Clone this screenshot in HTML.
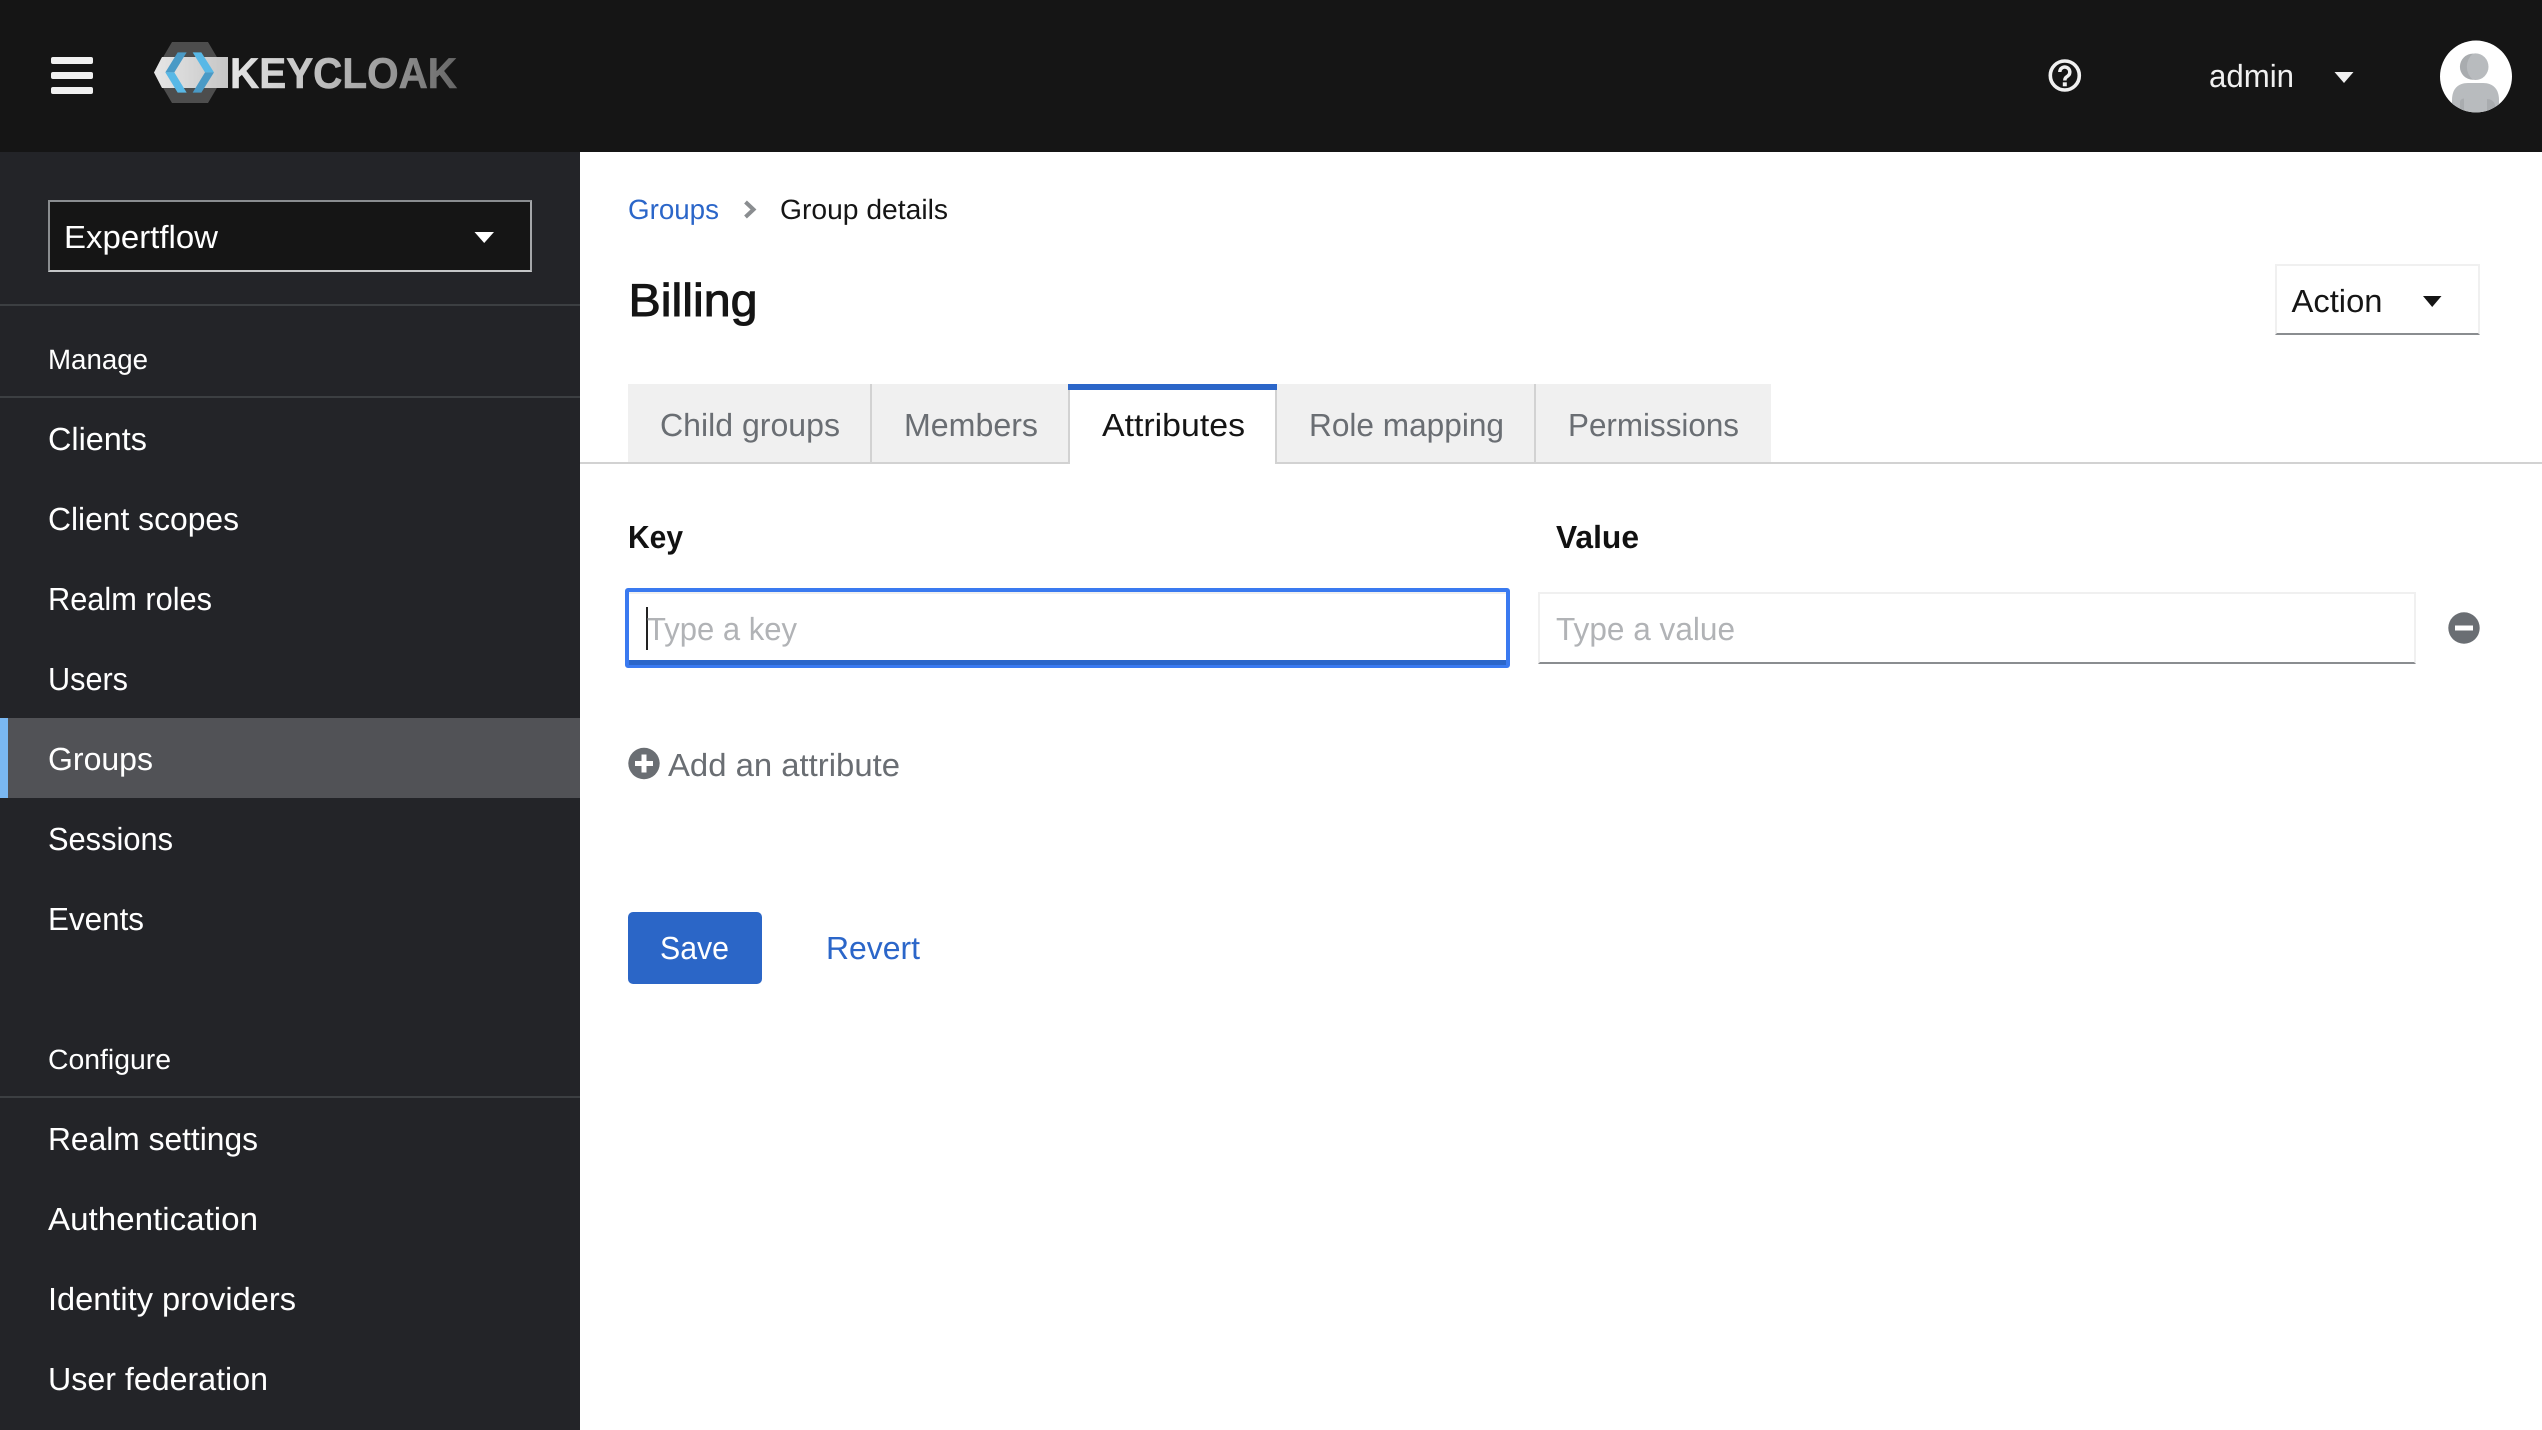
<!DOCTYPE html>
<html lang="en">
<head>
<meta charset="utf-8">
<title>Keycloak - Group details</title>
<style>
html,body{margin:0;padding:0;width:2542px;height:1430px;overflow:hidden;background:#fff}
.b{position:absolute;box-sizing:border-box}
svg{position:absolute;left:0;top:0}
text{font-family:"Liberation Sans",sans-serif;text-rendering:geometricPrecision}
.n{font-size:32px;fill:#fff}
.s{font-size:28px;fill:#fff}
.t{font-size:32px;fill:#6a6e73}
.p{font-size:32px;fill:#b1b3b6}
.k{font-size:32px;font-weight:700;fill:#111}
</style>
</head>
<body>
<div class="b" style="left:0;top:0;width:2542px;height:152px;background:#151515"></div>
<div class="b" style="left:0;top:152px;width:580px;height:1278px;background:#232428"></div>
<div class="b" style="left:51px;top:57px;width:42px;height:6.5px;background:#f0f0f0;border-radius:2px"></div>
<div class="b" style="left:51px;top:72px;width:42px;height:6.5px;background:#f0f0f0;border-radius:2px"></div>
<div class="b" style="left:51px;top:87px;width:42px;height:6.5px;background:#f0f0f0;border-radius:2px"></div>

<div class="b" style="left:48px;top:200px;width:484px;height:72px;background:#151515;border:2px solid #8a8d90;border-bottom-color:#c4c6c8;border-right-color:#a5a7aa"></div>
<div class="b" style="left:0;top:304px;width:580px;height:2px;background:#3c3f42"></div>
<div class="b" style="left:0;top:396px;width:580px;height:2px;background:#3c3f42"></div>
<div class="b" style="left:0;top:1096px;width:580px;height:2px;background:#3c3f42"></div>
<div class="b" style="left:0;top:718px;width:580px;height:80px;background:#515256;border-left:8px solid #7ab8f2"></div>

<div class="b" style="left:2275px;top:264px;width:205px;height:71px;background:#fff;border:2px solid #f0f0f0;border-bottom-color:#8a8d90"></div>

<div class="b" style="left:580px;top:462px;width:1962px;height:2px;background:#d2d2d2"></div>
<div class="b" style="left:628px;top:384px;width:244px;height:78px;background:#f0f0f0;border-right:2px solid #d2d2d2"></div>
<div class="b" style="left:872px;top:384px;width:197px;height:78px;background:#f0f0f0"></div>
<div class="b" style="left:1068px;top:384px;width:2px;height:80px;background:#d2d2d2"></div>
<div class="b" style="left:1070px;top:390px;width:206px;height:74px;background:#fff"></div>
<div class="b" style="left:1068px;top:384px;width:209px;height:6px;background:#2b66c9"></div>
<div class="b" style="left:1275px;top:390px;width:2px;height:74px;background:#d2d2d2"></div>
<div class="b" style="left:1277px;top:384px;width:259px;height:78px;background:#f0f0f0;border-right:2px solid #d2d2d2"></div>
<div class="b" style="left:1536px;top:384px;width:235px;height:78px;background:#f0f0f0"></div>

<div class="b" style="left:625px;top:588px;width:885px;height:80px;background:#fff;border:4px solid #3a7af0;border-radius:3px"></div>
<div class="b" style="left:629px;top:592px;width:877px;height:2px;background:#f0f0f0"></div>
<div class="b" style="left:629px;top:660px;width:877px;height:5px;background:#2b66c9"></div>
<div class="b" style="left:646px;top:607px;width:2px;height:43px;background:#222"></div>

<div class="b" style="left:1538px;top:592px;width:878px;height:72px;background:#fff;border:2px solid #f0f0f0;border-bottom-color:#8a8d90"></div>

<div class="b" style="left:628px;top:912px;width:134px;height:72px;background:#2b66c7;border-radius:5px"></div>

<svg width="2542" height="1430" viewBox="0 0 2542 1430" xmlns="http://www.w3.org/2000/svg">
<defs>
<linearGradient id="kc" gradientUnits="userSpaceOnUse" x1="230" y1="0" x2="457" y2="0">
<stop offset="0" stop-color="#e4e4e4"/><stop offset=".35" stop-color="#c4c4c4"/><stop offset=".65" stop-color="#a0a0a0"/><stop offset="1" stop-color="#666"/>
</linearGradient>
<linearGradient id="band" gradientUnits="userSpaceOnUse" x1="154" y1="0" x2="228" y2="0">
<stop offset="0" stop-color="#e6e6e6"/><stop offset="1" stop-color="#c6c6c6"/>
</linearGradient>
<clipPath id="av"><circle cx="2476" cy="76.5" r="36"/></clipPath>
</defs>

<!-- logo -->
<path d="M172 42H208L226 72.5L208 103H172L154 72.5Z" fill="#4d4d4d"/>
<path d="M154 72.5L162 57H228V88H162Z" fill="url(#band)"/>
<g transform="translate(130 20) scale(.3333)">
<path d="M106 157L143 97H170L133 157Z" fill="#4a9ac6"/>
<path d="M106 157H133L170 218H143Z" fill="#58b8e6"/>
<path d="M188 97H214L252 157H225Z" fill="#58b8e6"/>
<path d="M225 157H252L214 218H188Z" fill="#4a9ac6"/>
</g>
<text x="230" y="88" font-size="43" font-weight="700" fill="url(#kc)" stroke="url(#kc)" stroke-width=".6" textLength="227" lengthAdjust="spacingAndGlyphs">KEYCLOAK</text>

<!-- header right -->
<circle cx="2064.8" cy="75.5" r="14.500" fill="none" stroke="#f0f0f0" stroke-width="3.600"/>
<path d="M2059.8 72a5 5 0 1 1 8 4c-2 1.400-3 2.200-3 4.500" fill="none" stroke="#f0f0f0" stroke-width="3.500"/>
<rect x="2062.800" y="82.300" width="4" height="4" fill="#f0f0f0"/>
<text x="2209" y="87" class="n" style="fill:#f0f0f0" textLength="85" lengthAdjust="spacingAndGlyphs">admin</text>
<path d="M2334.500 72H2353.500L2344 83Z" fill="#f0f0f0"/>
<circle cx="2476" cy="76.500" r="36" fill="#fff"/>
<g clip-path="url(#av)">
<ellipse cx="2475.500" cy="66.700" rx="13" ry="13.300" fill="#b8bbbe"/>
<path d="M2473 53.600a13 13 0 0 0 0 26.200a17 17 0 0 1 0-26.200Z" fill="#a9acaf"/>
<path d="M2452 116V100c0-11 6-17 16-17h15c10 0 16 6 16 17v16Z" fill="#b8bbbe"/>
<path d="M2460 112v-10c0-2 2-3.500 4-3.500v13.500Z" fill="#a9acaf"/>
<path d="M2487 112V99c4 0 7 2 8 6v7Z" fill="#a9acaf"/>
</g>

<!-- sidebar -->
<text x="64" y="248" class="n" textLength="154" lengthAdjust="spacingAndGlyphs">Expertflow</text>
<path d="M474.500 232H494L484.200 243Z" fill="#fff"/>
<text x="48" y="369" class="s" textLength="100" lengthAdjust="spacingAndGlyphs">Manage</text>
<text x="48" y="450" class="n" textLength="99" lengthAdjust="spacingAndGlyphs">Clients</text>
<text x="48" y="530" class="n" textLength="191" lengthAdjust="spacingAndGlyphs">Client scopes</text>
<text x="48" y="610" class="n" textLength="164" lengthAdjust="spacingAndGlyphs">Realm roles</text>
<text x="48" y="690" class="n" textLength="80" lengthAdjust="spacingAndGlyphs">Users</text>
<text x="48" y="770" class="n" textLength="105" lengthAdjust="spacingAndGlyphs">Groups</text>
<text x="48" y="850" class="n" textLength="125" lengthAdjust="spacingAndGlyphs">Sessions</text>
<text x="48" y="930" class="n" textLength="96" lengthAdjust="spacingAndGlyphs">Events</text>
<text x="48" y="1069" class="s" textLength="123" lengthAdjust="spacingAndGlyphs">Configure</text>
<text x="48" y="1150" class="n" textLength="210" lengthAdjust="spacingAndGlyphs">Realm settings</text>
<text x="48" y="1230" class="n" textLength="210" lengthAdjust="spacingAndGlyphs">Authentication</text>
<text x="48" y="1310" class="n" textLength="248" lengthAdjust="spacingAndGlyphs">Identity providers</text>
<text x="48" y="1390" class="n" textLength="220" lengthAdjust="spacingAndGlyphs">User federation</text>

<!-- breadcrumb & title -->
<text x="628" y="219" font-size="28" fill="#2b66c9" textLength="91" lengthAdjust="spacingAndGlyphs">Groups</text>
<path d="M745.500 202L753.500 209.500L745.500 217" fill="none" stroke="#8a8d90" stroke-width="4"/>
<text x="780" y="219" font-size="28" fill="#151515" textLength="168" lengthAdjust="spacingAndGlyphs">Group details</text>
<text x="628.500" y="316" font-size="46" fill="#151515" stroke="#151515" stroke-width="1" textLength="129" lengthAdjust="spacingAndGlyphs">Billing</text>
<text x="2291.500" y="312" font-size="32" fill="#151515" textLength="91" lengthAdjust="spacingAndGlyphs">Action</text>
<path d="M2423 296H2441.500L2432.200 307Z" fill="#151515"/>

<!-- tabs -->
<text x="660" y="436" class="t" textLength="180" lengthAdjust="spacingAndGlyphs">Child groups</text>
<text x="904" y="436" class="t" textLength="134" lengthAdjust="spacingAndGlyphs">Members</text>
<text x="1102" y="436" class="t" style="fill:#151515" textLength="143" lengthAdjust="spacingAndGlyphs">Attributes</text>
<text x="1309" y="436" class="t" textLength="195" lengthAdjust="spacingAndGlyphs">Role mapping</text>
<text x="1568" y="436" class="t" textLength="171" lengthAdjust="spacingAndGlyphs">Permissions</text>

<!-- form -->
<text x="628" y="548" class="k" textLength="55" lengthAdjust="spacingAndGlyphs">Key</text>
<text x="1556" y="548" class="k" textLength="83" lengthAdjust="spacingAndGlyphs">Value</text>
<text x="647" y="640" class="p" textLength="150" lengthAdjust="spacingAndGlyphs">Type a key</text>
<text x="1556" y="640" class="p" textLength="179" lengthAdjust="spacingAndGlyphs">Type a value</text>

<circle cx="2464" cy="628" r="15.700" fill="#6a6e73"/>
<rect x="2455" y="625.500" width="18" height="5" fill="#fff"/>

<circle cx="644" cy="763.500" r="15.700" fill="#6a6e73"/>
<rect x="635" y="761" width="18" height="5" fill="#fff"/>
<rect x="641.500" y="754.500" width="5" height="18" fill="#fff"/>
<text x="668" y="776" class="t" textLength="232" lengthAdjust="spacingAndGlyphs">Add an attribute</text>

<text x="660" y="959" font-size="32" fill="#fff" textLength="69" lengthAdjust="spacingAndGlyphs">Save</text>
<text x="826" y="959" font-size="32" fill="#2b66c9" textLength="94" lengthAdjust="spacingAndGlyphs">Revert</text>
</svg>
</body>
</html>
